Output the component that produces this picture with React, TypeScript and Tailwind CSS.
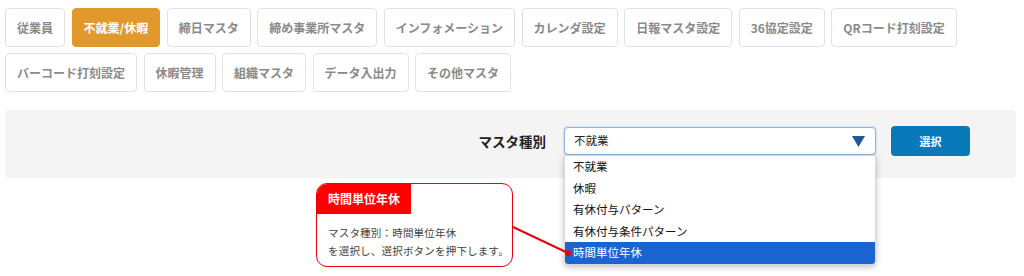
const tabsRow = [
  "従業員",
  "不就業/休暇",
  "締日マスタ",
  "締め事業所マスタ",
  "インフォメーション",
  "カレンダ設定",
  "日報マスタ設定",
  "36協定設定",
  "QRコード打刻設定",
  "バーコード打刻設定",
  "休暇管理",
  "組織マスタ",
  "データ入出力",
  "その他マスタ",
];

const options = ["不就業", "休暇", "有休付与パターン", "有休付与条件パターン", "時間単位年休"];

const font = { fontFamily: '"Noto Sans CJK JP", "Noto Sans", sans-serif' };

const App = () => {
  return (
    <div className="relative w-[1024px] h-[276px] bg-white overflow-hidden" style={font}>
      {/* tabs */}
      <div className="flex flex-wrap gap-x-[6.5px] gap-y-[6px] mx-[5px] pt-[8px] w-[1011px]">
        {tabsRow.map((t) => {
          const active = t === "不就業/休暇";
          return (
            <div
              key={t}
              className={
                active
                  ? "h-[39px] px-[11px] flex items-center rounded-[4px] border border-[#e0992a] bg-[#e0992a] text-white text-[12px] font-bold"
                  : "h-[39px] px-[11px] flex items-center rounded-[4px] border border-[#e2e2e2] bg-white text-[#8a8a8a] text-[12px] font-bold"
              }
            >
              {t}
            </div>
          );
        })}
      </div>

      {/* search panel */}
      <div className="mt-[18px] mx-[5px] w-[1011px] h-[68px] bg-[#f4f4f4] rounded-[4px] flex items-center justify-end pr-[46px] pb-[6px]">
        <div className="text-[13.5px] font-bold text-[#222] mr-[18px]">マスタ種別</div>
        <div className="relative w-[312px] h-[28px]">
          <div className="w-full h-full bg-white border border-[#8fb6dc] rounded-[4px] shadow-[0_0_2px_rgba(80,140,200,0.6)] flex items-center pl-[9px] text-[11.5px] text-[#222]">
            不就業
          </div>
          <svg className="absolute right-[11px] top-[9px]" width="13" height="11" viewBox="0 0 13 11">
            <path d="M0 0 H13 L6.5 11 Z" fill="#1d5a94" />
          </svg>
          {/* open list */}
          <div className="absolute left-0 top-[28px] w-full bg-white rounded-b-[4px] border border-[#d8d8d8] shadow-[0_2px_6px_rgba(0,0,0,0.25)] overflow-hidden z-10">
            {options.map((o) => (
              <div
                key={o}
                className={
                  o === "時間単位年休"
                    ? "h-[21.5px] flex items-center pl-[8px] text-[11.5px] bg-[#1a64d2] text-white"
                    : "h-[21.5px] flex items-center pl-[8px] text-[11.5px] text-[#111]"
                }
              >
                {o}
              </div>
            ))}
          </div>
        </div>
        <div className="ml-[15px] w-[79px] h-[30px] rounded-[4px] bg-[#0779b9] text-white text-[11px] font-bold flex items-center justify-center">
          選択
        </div>
      </div>

      {/* callout */}
      <div className="absolute left-[316px] top-[183px] w-[197px] h-[84px] border border-[#e8000b] rounded-[11px] bg-white overflow-hidden">
        <div className="w-[94px] h-[30px] bg-[#ff0000] text-white text-[12px] font-bold flex items-center pl-[11px]">
          時間単位年休
        </div>
        <div className="pl-[11px] pt-[10px] text-[10.5px] leading-[18px] text-[#444] tracking-[0.2px]">
          <div>マスタ種別：時間単位年休</div>
          <div>を選択し、選択ボタンを押下します。</div>
        </div>
      </div>
      <svg className="absolute left-0 top-0 z-20 pointer-events-none" width="1024" height="276">
        <line x1="513" y1="227" x2="568" y2="253" stroke="#e8000b" strokeWidth="2" />
        <circle cx="568" cy="253" r="3" fill="#e8000b" />
      </svg>
    </div>
  );
};

export default App;
